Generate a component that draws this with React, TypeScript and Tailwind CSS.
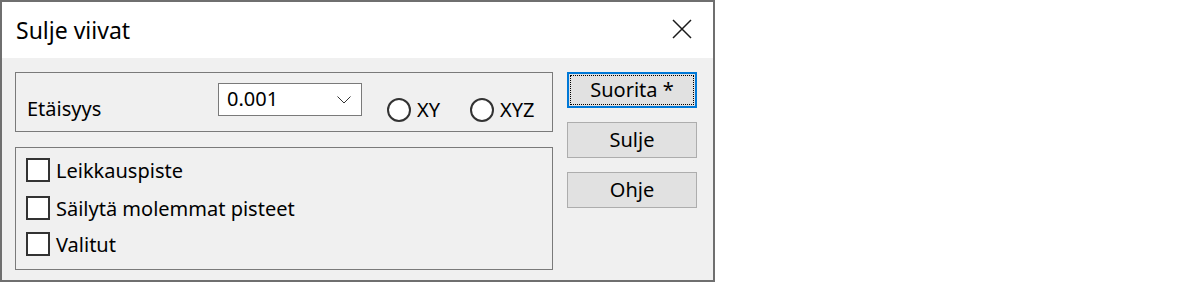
import { useState } from "react";

type TRadioProps = {
  label: string;
  checked: boolean;
  onSelect: () => void;
  width: string;
};

const Radio = ({ label, checked, onSelect, width }: TRadioProps) => {
  return (
    <label className={`flex items-center gap-[6px] ${width}`} onClick={onSelect}>
      <span className="w-[24px] h-[24px] rounded-full border-2 border-[#333333] bg-white flex items-center justify-center">
        {checked && <span className="w-[10px] h-[10px] rounded-full bg-[#333333]" />}
      </span>
      <span className="leading-[28px]">{label}</span>
    </label>
  );
};

type TCheckProps = {
  label: string;
  height: string;
};

const CheckRow = ({ label, height }: TCheckProps) => {
  const [checked, setChecked] = useState(false);
  return (
    <label
      className={`flex items-start gap-[6px] ${height}`}
      onClick={() => setChecked(!checked)}
    >
      <span className="w-[24px] h-[24px] border-2 border-[#333333] bg-white flex items-center justify-center">
        {checked && <span className="text-[16px] leading-none">✓</span>}
      </span>
      <span className="leading-[28px] -mt-[1px]">{label}</span>
    </label>
  );
};

const DialogButton = ({
  children,
  focused,
}: {
  children: React.ReactNode;
  focused?: boolean;
}) => {
  return (
    <button
      className={
        focused
          ? "h-[36px] w-[130px] bg-[#e1e1e1] border-2 border-[#0078d7] outline-1 outline-dotted outline-black outline-offset-[-4px] leading-[28px]"
          : "h-[36px] w-[130px] bg-[#e1e1e1] border border-[#adadad] leading-[28px]"
      }
    >
      {children}
    </button>
  );
};

export default function App() {
  const [mode, setMode] = useState<"xy" | "xyz" | "">("");

  return (
    <div
      className="w-[1200px] h-[282px] bg-white flex text-black"
      style={{ fontFamily: '"Segoe UI", "Noto Sans", sans-serif' }}
    >
      <div className="w-[715px] h-[282px] border-2 border-[#6f6f6f] bg-[#f0f0f0] flex flex-col">
        {/* title bar */}
        <div className="h-[56px] bg-white flex items-center justify-between pl-[14px] pr-[21px]">
          <span className="text-[23px] leading-[30px] -mt-[1px]">Sulje viivat</span>
          <svg width="20" height="20" viewBox="0 0 20 20" className="-mt-[2px]">
            <path d="M1 1 L19 19 M19 1 L1 19" stroke="#1a1a1a" strokeWidth="1.5" />
          </svg>
        </div>

        {/* body */}
        <div className="flex pt-[14px] pl-[13px] gap-[14px] text-[20px]">
          <div className="w-[538px] flex flex-col gap-[15px]">
            <div className="h-[60px] border border-[#7a7a7a] flex items-start">
              <span className="w-[202px] pl-[11px] mt-[22px] leading-[28px]">Etäisyys</span>
              <div className="mt-[10px] w-[144px] h-[33px] border border-[#7a7a7a] bg-white flex items-center justify-between pl-[8px] pr-[10px]">
                <span className="leading-[28px] -mt-[1px]">0.001</span>
                <svg width="14" height="8" viewBox="0 0 14 8">
                  <path d="M0.5 0.5 L7 7 L13.5 0.5" fill="none" stroke="#333" strokeWidth="1" />
                </svg>
              </div>
              <div className="ml-[25px] mt-[23px] flex">
                <Radio label="XY" width="w-[83px]" checked={mode === "xy"} onSelect={() => setMode("xy")} />
                <Radio label="XYZ" width="w-[70px]" checked={mode === "xyz"} onSelect={() => setMode("xyz")} />
              </div>
            </div>

            <div className="h-[123px] border border-[#7a7a7a] pt-[10px] pl-[10px] flex flex-col">
              <CheckRow label="Leikkauspiste" height="h-[38px]" />
              <CheckRow label="Säilytä molemmat pisteet" height="h-[37px]" />
              <CheckRow label="Valitut" height="h-[37px]" />
            </div>
          </div>

          <div className="flex flex-col gap-[14px]">
            <DialogButton focused>Suorita *</DialogButton>
            <DialogButton>Sulje</DialogButton>
            <DialogButton>Ohje</DialogButton>
          </div>
        </div>
      </div>
    </div>
  );
}
